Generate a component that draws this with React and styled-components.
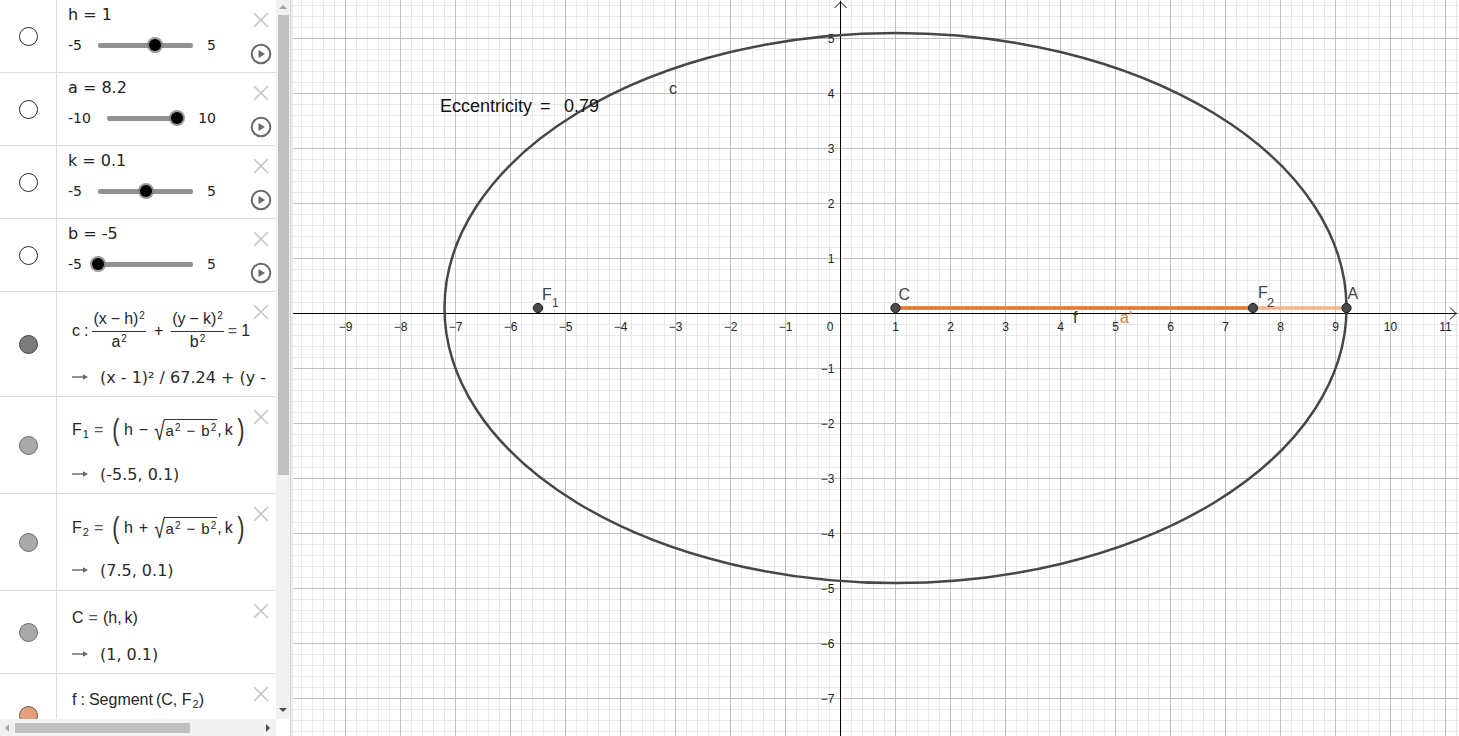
import React from "react";
import styled, { createGlobalStyle } from "styled-components";

const GlobalStyle = createGlobalStyle`
  *, *::before, *::after { box-sizing: border-box; }
  html, body { margin: 0; padding: 0; background: #fff; }
  body { font-family: "DejaVu Sans", sans-serif; color: #333; }
`;

const Screen = styled.div`
  display: flex;
  width: 1459px;
  height: 736px;
  overflow: hidden;
`;

const AlgebraView = styled.div`
  width: 290px;
  flex-shrink: 0;
  display: grid;
  grid-template-columns: 276px 14px;
  grid-template-rows: 719px 17px;
  background: #fff;
`;

const ItemList = styled.div`
  display: flex;
  flex-direction: column;
  overflow: hidden;
`;

const Splitter = styled.div`
  width: 3px;
  flex-shrink: 0;
  background: #ececec;
  border-left: 1px solid #d4d4d4;
`;

const Graphics = styled.div`
  flex: 1;
  overflow: hidden;
  background: #fff;
`;

/* ---------- algebra rows ---------- */

const Row = styled.div`
  display: flex;
  flex-shrink: 0;
  height: ${(p) => p.$h}px;
  border-bottom: 1px solid #dcdcdc;
`;

const MarbleCell = styled.div`
  width: 57px;
  flex-shrink: 0;
  display: flex;
  align-items: center;
  justify-content: center;
  border-right: 1px solid #dcdcdc;
`;

const marbles = {
  white: ["#fff", "#2a2a2a"],
  dark: ["#7c7c7c", "#444"],
  grey: ["#a9a9a9", "#6c6c6c"],
  orange: ["#e3a07a", "#6d5a4e"],
};

const Marble = styled.div`
  width: 19px;
  height: 19px;
  border-radius: 50%;
  background: ${(p) => marbles[p.$kind][0]};
  border: 1px solid ${(p) => marbles[p.$kind][1]};
`;

const Body = styled.div`
  flex: 1;
  min-width: 0;
  display: flex;
  overflow: hidden;
`;

const Content = styled.div`
  flex: 1;
  min-width: 0;
  display: flex;
  flex-direction: column;
  gap: ${(p) => p.$gap || 0}px;
  padding: ${(p) => p.$top}px 0 0 ${(p) => p.$left}px;
`;

const Actions = styled.div`
  width: 30px;
  flex-shrink: 0;
  display: flex;
  flex-direction: column;
  align-items: center;
  gap: 15px;
  padding-top: 12px;
`;

const Title = styled.div`
  font-size: 16px;
  line-height: 20px;
  color: #222;
  white-space: nowrap;
`;

const SliderLine = styled.div`
  display: flex;
  align-items: center;
  width: 148px;
  height: 20px;
  margin-top: 10px;
  font-size: 14px;
  color: #222;
`;

const Track = styled.div`
  position: relative;
  flex: 1;
  height: 5px;
  margin: 0 14px 0 16px;
  border-radius: 2px;
  background: #929292;
`;

const Thumb = styled.div`
  position: absolute;
  top: 50%;
  width: 12px;
  height: 12px;
  border-radius: 50%;
  background: #000;
  box-shadow: 0 0 0 2px rgba(120, 120, 120, 0.75);
  transform: translate(-50%, -50%);
`;

const Formula = styled.div`
  display: flex;
  align-items: center;
  height: ${(p) => p.$h || 20}px;
  white-space: nowrap;
  font-family: "Liberation Sans", Arial, sans-serif;
  font-size: 16px;
  color: #262626;
`;

const Op = styled.span`
  margin: 0 ${(p) => (p.$m === undefined ? 5 : p.$m)}px;
  color: ${(p) => (p.$light ? "#555" : "inherit")};
`;

const Sup = styled.span`
  position: relative;
  top: -0.5em;
  margin-left: 1px;
  font-size: 10px;
`;

const Sub = styled.span`
  position: relative;
  top: 0.35em;
  margin-left: 1px;
  font-size: 11px;
`;

const Frac = styled.span`
  display: inline-flex;
  flex-direction: column;
  align-items: center;
  font-size: 16px;
  line-height: 16px;
`;

const Num = styled.span`
  padding: 0 1px 2px;
  border-bottom: 1px solid #333;
`;

const Den = styled.span`
  padding-top: 2px;
`;

const BigParen = styled.span`
  display: inline-block;
  margin: 0 3px;
  font-size: 29px;
  line-height: 20px;
  transform: scaleX(0.75);
  color: #333;
`;

const Radical = styled.span`
  display: inline-block;
  position: relative;
  top: 2px;
  font-size: 19px;
  transform: scaleY(1.35);
  margin-right: -1px;
`;

const Radicand = styled.span`
  padding: 2px 1px 0 2px;
  border-top: 1px solid #333;
  font-size: 15px;
  line-height: 18px;
`;

const Output = styled.div`
  display: flex;
  align-items: center;
  gap: 12px;
  height: 20px;
  white-space: nowrap;
  font-size: 16px;
  color: #2b2b2b;

  svg {
    flex-shrink: 0;
  }
`;

/* ---------- scrollbars ---------- */

const VScroll = styled.div`
  display: flex;
  flex-direction: column;
  align-items: center;
  background: #f1f1f1;
`;

const HScroll = styled.div`
  display: flex;
  align-items: center;
  padding: 0 6px 0 5px;
  background: #f1f1f1;
`;

const Corner = styled.div`
  background: #fff;
`;

const arrowBorders = {
  up: (c) => `border-bottom: 4px solid ${c}; border-left: 4px solid transparent; border-right: 4px solid transparent;`,
  down: (c) => `border-top: 4px solid ${c}; border-left: 4px solid transparent; border-right: 4px solid transparent;`,
  left: (c) => `border-right: 4px solid ${c}; border-top: 4px solid transparent; border-bottom: 4px solid transparent;`,
  right: (c) => `border-left: 4px solid ${c}; border-top: 4px solid transparent; border-bottom: 4px solid transparent;`,
};

const ScrollArrow = styled.div`
  width: 0;
  height: 0;
  flex-shrink: 0;
  ${(p) => arrowBorders[p.$dir](p.$dark ? "#505050" : "#a3a3a3")}
  margin: ${(p) => p.$margin || 0};
`;

const VThumb = styled.div`
  width: 11px;
  height: 460px;
  margin-top: 6px;
  background: #c1c1c1;
`;

const HThumb = styled.div`
  width: 175px;
  height: 10px;
  margin-left: 6px;
  background: #c1c1c1;
`;

const Spacer = styled.div`
  flex: 1;
`;

/* ---------- graphics ---------- */

const Plot = styled.svg`
  display: block;
`;

const AxisText = styled.text`
  font-family: "Liberation Sans", Arial, sans-serif;
  font-size: 12px;
  fill: #222;
`;

const ObjText = styled.text`
  font-family: "Liberation Sans", Arial, sans-serif;
  font-size: ${(p) => p.$size || 16}px;
  fill: ${(p) => p.$color || "#444"};
`;

const CloseIcon = () => (
  <svg width="16" height="16" viewBox="0 0 16 16">
    <path d="M1 1L15 15M15 1L1 15" stroke="#c6c6c6" strokeWidth="1.6" fill="none" />
  </svg>
);

const PlayIcon = () => (
  <svg width="22" height="22" viewBox="0 0 22 22">
    <circle cx="11" cy="11" r="9.3" fill="none" stroke="#6a6a6a" strokeWidth="2" />
    <path d="M8.5 7L15 11L8.5 15Z" fill="#6a6a6a" />
  </svg>
);

const ArrowIcon = () => (
  <svg width="16" height="8" viewBox="0 0 16 8">
    <path d="M0 4H12" stroke="#666" strokeWidth="1.4" />
    <path d="M11 1.2L16 4L11 6.8Z" fill="#666" />
  </svg>
);

const sliders = [
  { name: "h", text: "1", min: -5, max: 5, value: 1 },
  { name: "a", text: "8.2", min: -10, max: 10, value: 8.2 },
  { name: "k", text: "0.1", min: -5, max: 5, value: 0.1 },
  { name: "b", text: "-5", min: -5, max: 5, value: -5 },
];

function SliderRow({ s }) {
  const pct = ((s.value - s.min) / (s.max - s.min)) * 100;
  return (
    <Row $h={73}>
      <MarbleCell>
        <Marble $kind="white" />
      </MarbleCell>
      <Body>
        <Content $top={5} $left={11}>
          <Title>
            {s.name} = {s.text}
          </Title>
          <SliderLine>
            <span>{s.min}</span>
            <Track>
              <Thumb style={{ left: `${pct}%` }} />
            </Track>
            <span>{s.max}</span>
          </SliderLine>
        </Content>
        <Actions>
          <CloseIcon />
          <PlayIcon />
        </Actions>
      </Body>
    </Row>
  );
}

function FormulaRow({ h, marble, top, gap, children }) {
  return (
    <Row $h={h}>
      <MarbleCell>
        <Marble $kind={marble} />
      </MarbleCell>
      <Body>
        <Content $top={top} $left={15} $gap={gap}>
          {children}
        </Content>
        <Actions>
          <CloseIcon />
        </Actions>
      </Body>
    </Row>
  );
}

function Focus({ idx, sign }) {
  return (
    <Formula $h={30}>
      F<Sub>{idx}</Sub>
      <Op $light>=</Op>
      <BigParen>(</BigParen>h<Op $m={6}>{sign}</Op>
      <Radical>√</Radical>
      <Radicand>
        a<Sup>2</Sup>
        <Op $m={6}>−</Op>b<Sup>2</Sup>
      </Radicand>
      ,<span style={{ marginLeft: 3 }}>k</span>
      <BigParen>)</BigParen>
    </Formula>
  );
}

/* ---------- graph geometry ---------- */

const W = 1166;
const H = 736;
const OX = 547.5;
const OY = 313.5;
const U = 55;
const STEP = 11;

const px = (x) => OX + x * U;
const py = (y) => OY - y * U;

const vLines = [];
for (let i = -50; i <= 57; i++) {
  const x = OX + STEP * i;
  if (x >= 0 && x <= W) vLines.push({ x, major: i % 5 === 0 });
}
const hLines = [];
for (let j = -29; j <= 39; j++) {
  const y = OY + STEP * j;
  if (y >= 0 && y <= H) hLines.push({ y, major: j % 5 === 0 });
}

const xTicks = [];
for (let n = -9; n <= 11; n++) if (n !== 0) xTicks.push(n);
const yTicks = [];
for (let n = 5; n >= -7; n--) if (n !== 0) yTicks.push(n);

const num = (n) => (n < 0 ? `\u2212${-n}` : `${n}`);

function Graph() {
  const cx = px(1);
  const cy = py(0.1);
  const f1 = px(-5.5);
  const f2 = px(7.5);
  const ax = px(9.2);
  return (
    <Plot width={W} height={H} viewBox={`0 0 ${W} ${H}`}>
      {vLines.filter((l) => !l.major).map((l) => (
        <line key={`vm${l.x}`} x1={l.x} y1={0} x2={l.x} y2={H} stroke="#e8e8e8" strokeWidth="1" />
      ))}
      {hLines.filter((l) => !l.major).map((l) => (
        <line key={`hm${l.y}`} x1={0} y1={l.y} x2={W} y2={l.y} stroke="#e8e8e8" strokeWidth="1" />
      ))}
      {vLines.filter((l) => l.major).map((l) => (
        <line key={`vM${l.x}`} x1={l.x} y1={0} x2={l.x} y2={H} stroke="#c0c0c0" strokeWidth="1" />
      ))}
      {hLines.filter((l) => l.major).map((l) => (
        <line key={`hM${l.y}`} x1={0} y1={l.y} x2={W} y2={l.y} stroke="#c0c0c0" strokeWidth="1" />
      ))}

      <line x1={0} y1={OY} x2={W - 2} y2={OY} stroke="#000" strokeWidth="1" />
      <path d={`M${W - 9} ${OY - 6}L${W - 3} ${OY}L${W - 9} ${OY + 6}`} stroke="#000" fill="none" strokeWidth="1" />
      <line x1={OX} y1={1} x2={OX} y2={H} stroke="#000" strokeWidth="1" />
      <path d={`M${OX - 6} ${8}L${OX} ${2}L${OX + 6} ${8}`} stroke="#000" fill="none" strokeWidth="1" />

      {xTicks.map((n) => (
        <AxisText key={`xt${n}`} x={px(n)} y={OY + 17} textAnchor="middle">
          {num(n)}
        </AxisText>
      ))}
      {yTicks.map((n) => (
        <AxisText key={`yt${n}`} x={OX - 6} y={py(n) + 4.5} textAnchor="end">
          {num(n)}
        </AxisText>
      ))}
      <AxisText x={OX - 7} y={OY + 17} textAnchor="end">
        0
      </AxisText>

      <line x1={cx} y1={cy} x2={ax} y2={cy} stroke="#f4b48c" strokeWidth="3.5" />
      <line x1={cx} y1={cy} x2={f2} y2={cy} stroke="#e07b39" strokeWidth="3.5" />

      <ellipse cx={cx} cy={cy} rx={8.2 * U} ry={5 * U} fill="none" stroke="#474747" strokeWidth="2.5" />

      {[f1, cx, f2, ax].map((x) => (
        <circle key={`p${x}`} cx={x} cy={cy} r="4.6" fill="#4a4a4a" stroke="#1c1c1c" strokeWidth="1" />
      ))}

      <ObjText x={f1 + 4} y={300}>F</ObjText>
      <ObjText x={f1 + 14} y={307} $size={12}>1</ObjText>
      <ObjText x={cx + 3} y={300}>C</ObjText>
      <ObjText x={f2 + 5} y={298}>F</ObjText>
      <ObjText x={f2 + 14} y={307} $size={13}>2</ObjText>
      <ObjText x={ax + 1} y={299}>A</ObjText>
      <ObjText x={780} y={323} $color="#333">f</ObjText>
      <ObjText x={827} y={323} $color="#e07b39">a'</ObjText>
      <ObjText x={376} y={94} $color="#333">c</ObjText>

      <ObjText x={147} y={112} $size={18} $color="#111">Eccentricity</ObjText>
      <ObjText x={247} y={112} $size={18} $color="#111">=</ObjText>
      <ObjText x={271} y={112} $size={18} $color="#111">0.79</ObjText>
    </Plot>
  );
}

export default function App() {
  return (
    <>
      <GlobalStyle />
      <Screen>
        <AlgebraView>
          <ItemList>
            {sliders.map((s) => (
              <SliderRow key={s.name} s={s} />
            ))}

            <FormulaRow h={105} marble="dark" top={21} gap={18}>
              <Formula $h={36}>
                c<Op $m={4}>:</Op>
                <Frac>
                  <Num>
                    (x<Op $m={4}>−</Op>h)<Sup>2</Sup>
                  </Num>
                  <Den>
                    a<Sup>2</Sup>
                  </Den>
                </Frac>
                <Op $m={8}>+</Op>
                <Frac>
                  <Num>
                    (y<Op $m={4}>−</Op>k)<Sup>2</Sup>
                  </Num>
                  <Den>
                    b<Sup>2</Sup>
                  </Den>
                </Frac>
                <Op $m={4} $light>=</Op>1
              </Formula>
              <Output>
                <ArrowIcon />
                <span>(x - 1)² / 67.24 + (y -</span>
              </Output>
            </FormulaRow>

            <FormulaRow h={97} marble="grey" top={18} gap={19}>
              <Focus idx="1" sign="−" />
              <Output>
                <ArrowIcon />
                <span>(-5.5, 0.1)</span>
              </Output>
            </FormulaRow>

            <FormulaRow h={97} marble="grey" top={19} gap={17}>
              <Focus idx="2" sign="+" />
              <Output>
                <ArrowIcon />
                <span>(7.5, 0.1)</span>
              </Output>
            </FormulaRow>

            <FormulaRow h={83} marble="grey" top={17} gap={16}>
              <Formula>
                C<Op $light>=</Op>(h,<span style={{ marginLeft: 3 }}>k)</span>
              </Formula>
              <Output>
                <ArrowIcon />
                <span>(1, 0.1)</span>
              </Output>
            </FormulaRow>

            <FormulaRow h={83} marble="orange" top={16} gap={16}>
              <Formula>
                f<Op $m={4}>:</Op>Segment<span style={{ marginLeft: 3 }}>(C, F</span>
                <Sub>2</Sub>)
              </Formula>
            </FormulaRow>
          </ItemList>

          <VScroll>
            <ScrollArrow $dir="up" $margin="5px 0 0" />
            <VThumb />
            <Spacer />
            <ScrollArrow $dir="down" $dark $margin="0 0 7px" />
          </VScroll>

          <HScroll>
            <ScrollArrow $dir="left" />
            <HThumb />
            <Spacer />
            <ScrollArrow $dir="right" $dark />
          </HScroll>
          <Corner />
        </AlgebraView>
        <Splitter />
        <Graphics>
          <Graph />
        </Graphics>
      </Screen>
    </>
  );
}
